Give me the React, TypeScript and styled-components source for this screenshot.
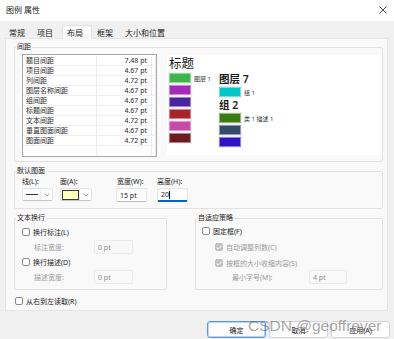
import React from 'react';
import styled, { createGlobalStyle } from 'styled-components';

const GlobalStyle = createGlobalStyle`
  html, body { margin: 0; padding: 0; background: #f0f0f0; }
  body { font-family: "Noto Sans", "Noto Sans CJK SC", sans-serif; color: #1a1a1a; }
  * { box-sizing: border-box; }
`;

const Window = styled.div`
  position: relative;
  width: 394px;
  height: 339px;
  overflow: hidden;
  background: #f0f0f0;
  display: flex;
  flex-direction: column;
`;

const TitleBar = styled.div`
  height: 21px;
  flex: none;
  background: #fff;
  display: flex;
  align-items: center;
  justify-content: space-between;
  padding: 0 7px 2px 6px;
  font-size: 8px;
`;

const TabRow = styled.div`
  height: 17px;
  flex: none;
  display: flex;
  align-items: flex-end;
  padding-left: 4px;
  position: relative;
  z-index: 1;
`;

const Tab = styled.div<{ $w: number; $active?: boolean }>`
  width: ${p => p.$w}px;
  height: ${p => (p.$active ? 14 : 13)}px;
  margin-bottom: ${p => (p.$active ? -1 : 0)}px;
  padding-left: 4px;
  font-size: 8px;
  line-height: 13px;
  background: ${p => (p.$active ? '#f9f9f9' : 'transparent')};
  border: 1px solid ${p => (p.$active ? '#e3e3e3' : 'transparent')};
  border-bottom: none;
  border-radius: 3px 3px 0 0;
`;

const Panel = styled.div`
  margin-left: 5px;
  width: 383px;
  height: 273px;
  flex: none;
  background: #f9f9f9;
  border: 1px solid #e5e5e5;
  padding: 8px 4px 0 8px;
  display: flex;
  flex-direction: column;
`;

const Group = styled.div<{ $mt?: number; $w?: number }>`
  position: relative;
  margin-top: ${p => p.$mt ?? 0}px;
  ${p => (p.$w ? `width: ${p.$w}px; flex: none;` : '')}
  border: 1px solid #e2e2e2;
  border-radius: 2px;
  font-size: 7px;
`;

const Caption = styled.div`
  position: absolute;
  top: -6px;
  left: 1px;
  padding: 0 1px;
  line-height: 10px;
  font-size: 7px;
  background: #f9f9f9;
  color: #1a1a1a;
`;

const SpacingBody = styled.div`
  display: flex;
  align-items: flex-start;
  padding: 6px 0 4px 7px;
`;

const Table = styled.div`
  width: 135px;
  height: 103px;
  flex: none;
  background: #fff;
  border: 1px solid #a8a8a8;
  padding-top: 1px;
  display: flex;
  flex-direction: column;
`;

const TRow = styled.div<{ $fill?: boolean }>`
  display: grid;
  grid-template-columns: 74px 55px 1fr;
  height: ${p => (p.$fill ? 'auto' : '10px')};
  flex: ${p => (p.$fill ? 1 : 'none')};
  border-bottom: ${p => (p.$fill ? 'none' : '1px solid #efefef')};
  font-size: 7px;
  line-height: 9px;
  color: #2a2a2a;
`;

const TCell = styled.div<{ $right?: boolean }>`
  border-right: 1px solid #ececec;
  padding: 0 ${p => (p.$right ? 4 : 0)}px 0 ${p => (p.$right ? 0 : 3)}px;
  text-align: ${p => (p.$right ? 'right' : 'left')};
  white-space: nowrap;
  overflow: hidden;
`;

const Preview = styled.div`
  flex: 1;
  height: 100px;
  margin: 1px 0 0 10px;
  background: #fff;
  padding: 1px 0 0 2px;
`;

const PreviewTitle = styled.div`
  font-size: 12.5px;
  line-height: 16px;
  height: 17px;
`;

const PreviewCols = styled.div`
  display: flex;
`;

const PreviewCol = styled.div<{ $w?: number }>`
  width: ${p => (p.$w ? `${p.$w}px` : 'auto')};
  display: flex;
  flex-direction: column;
`;

const LegendItem = styled.div`
  display: flex;
  align-items: center;
  height: 10px;
  margin-bottom: 2px;
`;

const Swatch = styled.div<{ $c: string }>`
  width: 22px;
  height: 10px;
  flex: none;
  background: ${p => p.$c};
  border: 1px solid rgba(255, 255, 255, 0.45);
  outline: 1px solid rgba(0, 0, 0, 0.06);
`;

const SwatchLabel = styled.span`
  font-size: 6px;
  margin-left: 3px;
  color: #333;
  white-space: nowrap;
`;

const PreviewHeading = styled.div`
  font-size: 10.5px;
  font-weight: 600;
  line-height: 13px;
  height: 14px;
`;

const DefaultBody = styled.div`
  display: flex;
  padding: 5px 0 6px 7px;
`;

const Field = styled.div<{ $w: number }>`
  width: ${p => p.$w}px;
  flex: none;
  display: flex;
  flex-direction: column;
  gap: 1px;
`;

const FieldLabel = styled.div<{ $indent?: number }>`
  font-size: 7px;
  line-height: 10px;
  padding-left: ${p => p.$indent ?? 0}px;
  white-space: nowrap;
`;

const Combo = styled.div<{ $w: number }>`
  width: ${p => p.$w}px;
  height: 13px;
  display: flex;
  background: #fff;
  border: 1px solid #e3e3e3;
  border-bottom-color: #c6c6c6;
  border-radius: 2px;
`;

const ComboMain = styled.div`
  flex: 1;
  display: flex;
  align-items: center;
  justify-content: center;
  border-right: 1px solid #ececec;
`;

const ComboArrow = styled.div`
  width: 11px;
  display: flex;
  align-items: center;
  justify-content: center;
`;

const LineSample = styled.div`
  width: 12px;
  border-top: 1px solid #333;
`;

const FillSample = styled.div`
  width: 17px;
  height: 10px;
  background: #ffffc0;
  border: 1px solid #3a3a3a;
`;

const Input = styled.div<{ $w: number; $focus?: boolean; $disabled?: boolean }>`
  width: ${p => p.$w}px;
  height: 14px;
  display: flex;
  align-items: center;
  padding-left: 3px;
  font-size: 7px;
  background: ${p => (p.$disabled ? '#f9f9f9' : '#fff')};
  border: 1px solid ${p => (p.$disabled ? '#ececec' : '#e5e5e5')};
  border-bottom: ${p =>
    p.$focus ? '2px solid #0067c0' : p.$disabled ? '1px solid #ececec' : '1px solid #bdbdbd'};
  border-radius: 2px;
  color: ${p => (p.$disabled ? '#8a8a8a' : '#1a1a1a')};
`;

const Caret = styled.span`
  display: inline-block;
  width: 0;
  height: 8px;
  border-left: 1px solid #000;
`;

const BottomGroups = styled.div`
  display: flex;
  justify-content: space-between;
  margin-top: 9px;
`;

const GroupBody = styled.div<{ $pl: number; $pt: number }>`
  height: 70px;
  padding: ${p => p.$pt}px 0 0 ${p => p.$pl}px;
  display: flex;
  flex-direction: column;
`;

const CheckRow = styled.label<{ $mt?: number; $ml?: number; $disabled?: boolean }>`
  display: flex;
  align-items: center;
  height: 10px;
  margin-top: ${p => p.$mt ?? 0}px;
  margin-left: ${p => p.$ml ?? 0}px;
  font-size: 7px;
  color: ${p => (p.$disabled ? '#9a9a9a' : '#1a1a1a')};
  white-space: nowrap;
`;

const Box = styled.span<{ $checked?: boolean }>`
  width: 8px;
  height: 8px;
  flex: none;
  margin-right: 3px;
  border-radius: 2px;
  display: flex;
  align-items: center;
  justify-content: center;
  background: ${p => (p.$checked ? '#c2c2c2' : '#fdfdfd')};
  border: 1px solid ${p => (p.$checked ? '#c2c2c2' : '#8a8a8a')};
`;

const SubRow = styled.div<{ $mt: number; $ml: number; $labelW: number }>`
  display: flex;
  align-items: center;
  margin-top: ${p => p.$mt}px;
  margin-left: ${p => p.$ml}px;
  font-size: 7px;
  color: #9a9a9a;

  & > span {
    width: ${p => p.$labelW}px;
    flex: none;
  }
`;

const Footer = styled.div`
  display: flex;
  justify-content: flex-end;
  gap: 3px;
  padding: 10px 4px 0 0;
`;

const Button = styled.div<{ $primary?: boolean }>`
  width: 59px;
  height: 17px;
  display: flex;
  align-items: center;
  justify-content: center;
  font-size: 7px;
  background: #fdfdfd;
  border: 1px solid ${p => (p.$primary ? '#5c9ad6' : '#d3d3d3')};
  box-shadow: ${p => (p.$primary ? 'inset 0 0 0 1px #b9d5f0' : 'none')};
  border-radius: 3px;
`;

const Watermark = styled.div`
  position: absolute;
  left: 248px;
  top: 316px;
  font-family: "Liberation Sans", Arial, sans-serif;
  font-size: 15.5px;
  line-height: 20px;
  color: rgba(95, 95, 95, 0.55);
  white-space: nowrap;
  pointer-events: none;
`;

const Chevron = () => (
  <svg width="6" height="4" viewBox="0 0 6 4">
    <path d="M0.5 0.5L3 3L5.5 0.5" fill="none" stroke="#8a8a8a" strokeWidth="0.8" />
  </svg>
);

const Tick = () => (
  <svg width="6" height="5" viewBox="0 0 6 5">
    <path d="M0.6 2.6L2.2 4L5.4 0.8" fill="none" stroke="#fff" strokeWidth="1" />
  </svg>
);

const spacing = [
  ['题目间距', '7.48 pt'],
  ['项目间距', '4.67 pt'],
  ['列间距', '4.72 pt'],
  ['图层名称间距', '4.67 pt'],
  ['组间距', '4.67 pt'],
  ['标题间距', '4.67 pt'],
  ['文本间距', '4.72 pt'],
  ['垂直图面间距', '4.67 pt'],
  ['图面间距', '4.72 pt'],
];

const leftSwatches = ['#3cb64a', '#a42bb8', '#4a23a3', '#a8232c', '#c44ba9', '#6a1c1e'];

const App = () => {
  return (
    <>
      <GlobalStyle />
      <Window>
        <TitleBar>
          <span>图例 属性</span>
          <svg width="8" height="8" viewBox="0 0 8 8">
            <path d="M0.5 0.5L7.5 7.5M7.5 0.5L0.5 7.5" stroke="#333" strokeWidth="0.9" />
          </svg>
        </TitleBar>

        <TabRow>
          <Tab $w={28}>常规</Tab>
          <Tab $w={30}>项目</Tab>
          <Tab $w={30} $active>布局</Tab>
          <Tab $w={28}>框架</Tab>
          <Tab $w={50}>大小和位置</Tab>
        </TabRow>

        <Panel>
          <Group>
            <Caption>间距</Caption>
            <SpacingBody>
              <Table>
                {spacing.map(([name, value]) => (
                  <TRow key={name}>
                    <TCell>{name}</TCell>
                    <TCell $right>{value}</TCell>
                    <TCell />
                  </TRow>
                ))}
                <TRow $fill>
                  <TCell />
                  <TCell />
                  <TCell />
                </TRow>
              </Table>
              <Preview>
                <PreviewTitle>标题</PreviewTitle>
                <PreviewCols>
                  <PreviewCol $w={50}>
                    {leftSwatches.map((c, i) => (
                      <LegendItem key={c}>
                        <Swatch $c={c} />
                        {i === 0 && <SwatchLabel>图层 1</SwatchLabel>}
                      </LegendItem>
                    ))}
                  </PreviewCol>
                  <PreviewCol>
                    <PreviewHeading>图层 7</PreviewHeading>
                    <LegendItem>
                      <Swatch $c="#00c8c8" />
                      <SwatchLabel>组 1</SwatchLabel>
                    </LegendItem>
                    <PreviewHeading>组 2</PreviewHeading>
                    <LegendItem>
                      <Swatch $c="#3a7a0f" />
                      <SwatchLabel>类 1 描述 1</SwatchLabel>
                    </LegendItem>
                    <LegendItem>
                      <Swatch $c="#36496b" />
                    </LegendItem>
                    <LegendItem>
                      <Swatch $c="#3313c8" />
                    </LegendItem>
                  </PreviewCol>
                </PreviewCols>
              </Preview>
            </SpacingBody>
          </Group>

          <Group $mt={9}>
            <Caption>默认图面</Caption>
            <DefaultBody>
              <Field $w={38}>
                <FieldLabel>线(L):</FieldLabel>
                <Combo $w={31}>
                  <ComboMain>
                    <LineSample />
                  </ComboMain>
                  <ComboArrow>
                    <Chevron />
                  </ComboArrow>
                </Combo>
              </Field>
              <Field $w={56}>
                <FieldLabel>面(A):</FieldLabel>
                <Combo $w={32}>
                  <ComboMain>
                    <FillSample />
                  </ComboMain>
                  <ComboArrow>
                    <Chevron />
                  </ComboArrow>
                </Combo>
              </Field>
              <Field $w={41}>
                <FieldLabel $indent={1}>宽度(W):</FieldLabel>
                <Input $w={31}>15 pt</Input>
              </Field>
              <Field $w={40}>
                <FieldLabel>高度(H):</FieldLabel>
                <Input $w={31} $focus>
                  20
                  <Caret />
                </Input>
              </Field>
            </DefaultBody>
          </Group>

          <BottomGroups>
            <Group $w={153}>
              <Caption>文本换行</Caption>
              <GroupBody $pl={7} $pt={8}>
                <CheckRow>
                  <Box />
                  换行标注(L)
                </CheckRow>
                <SubRow $mt={3} $ml={12} $labelW={60}>
                  <span>标注宽度:</span>
                  <Input $w={39} $disabled>0 pt</Input>
                </SubRow>
                <CheckRow $mt={3}>
                  <Box />
                  换行描述(D)
                </CheckRow>
                <SubRow $mt={3} $ml={12} $labelW={60}>
                  <span>描述宽度:</span>
                  <Input $w={39} $disabled>0 pt</Input>
                </SubRow>
              </GroupBody>
            </Group>

            <Group $w={188}>
              <Caption>自适应策略</Caption>
              <GroupBody $pl={6} $pt={7}>
                <CheckRow>
                  <Box />
                  固定框(F)
                </CheckRow>
                <CheckRow $mt={6} $ml={13} $disabled>
                  <Box $checked>
                    <Tick />
                  </Box>
                  自动调整列数(C)
                </CheckRow>
                <CheckRow $mt={6} $ml={13} $disabled>
                  <Box $checked>
                    <Tick />
                  </Box>
                  按框的大小收缩内容(S)
                </CheckRow>
                <SubRow $mt={2} $ml={30} $labelW={77}>
                  <span>最小字号(M):</span>
                  <Input $w={38} $disabled>4 pt</Input>
                </SubRow>
              </GroupBody>
            </Group>
          </BottomGroups>

          <CheckRow $mt={6} $ml={1}>
            <Box />
            从右到左读取(R)
          </CheckRow>
        </Panel>

        <Footer>
          <Button $primary>确定</Button>
          <Button>取消</Button>
          <Button>应用(A)</Button>
        </Footer>

        <Watermark>CSDN @geoffrever</Watermark>
      </Window>
    </>
  );
};

export default App;
